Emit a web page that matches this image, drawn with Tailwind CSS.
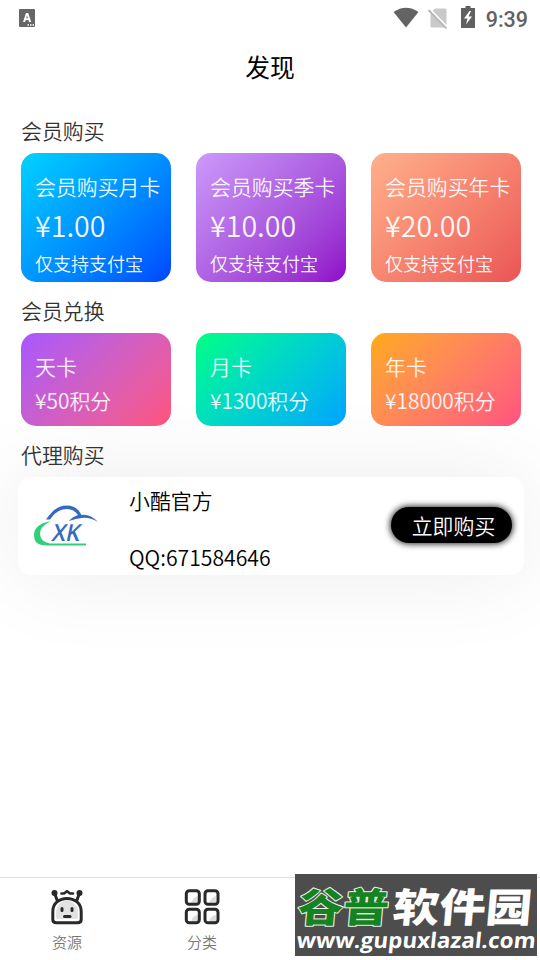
<!DOCTYPE html>
<html lang="zh-CN">
<head>
<meta charset="utf-8">
<meta name="viewport" content="width=device-width, initial-scale=1">
<title>发现</title>
<script src="https://cdn.jsdelivr.net/npm/@tailwindcss/browser@4"></script>
</head>
<body class="bg-white font-['Noto_Sans_CJK_SC',sans-serif] text-[20.9px] font-[350] text-[#333]">
<div class="relative flex h-[960px] w-[540px] flex-col overflow-hidden">
  <header class="flex h-9 shrink-0 items-center justify-between pl-[19px] pr-3">
    <svg class="h-[18px] w-4" viewBox="0 0 16 18"><rect width="16" height="18" rx="1" fill="#666"/><path d="M4 13 7 4h2.200l3 9H10l-.6-2H6.700l-.6 2zM7.200 9.200h1.700L8 6.500z" fill="#fff"/><path d="M8.500 16h1.500m1 0h1.500m1 0H15" stroke="#fff" stroke-width="1.400"/></svg>
    <div class="flex items-center">
      <svg class="mb-0.5 h-[21px] w-[26px]" viewBox="0 0 26 21"><path d="M0.500 5Q13-3.500 25.500 5L13 20.500z" fill="#636363"/></svg>
      <svg class="ml-[9px] h-[21px] w-5" viewBox="0 0 20 21"><path d="M7 .5h10q1.500 0 1.500 1.500V18q0 1-1 1.500H4q-1.500 0-1.500-1.500V5z" fill="#c9c9c9"/><path d="M1.500 1 20 20" stroke="#fff" stroke-width="2"/><path d="M.4 2 18.500 20.500" stroke="#b8b8b8" stroke-width="1.800"/></svg>
      <svg class="mb-0.5 ml-[13px] h-[22px] w-[14px]" viewBox="0 0 14 22"><path d="M4.500 0h5v2H14v20H0V2h4.500z" fill="#606060"/><path d="M8.500 5 3 12.500h3.500L5 18.500l6-8H7.500L10 5z" fill="#fff"/></svg>
      <span class="mt-[3px] ml-[11px] font-['Roboto',sans-serif] text-[21.500px] leading-none font-medium text-[#616161]">9:39</span>
    </div>
  </header>
  <h1 class="flex h-[62px] shrink-0 items-center justify-center text-[24.800px] font-normal text-black">发现</h1>

  <main class="flex flex-col px-[21px]">
    <h2 class="mt-[17px] h-[30px] leading-[30px] font-[350]">会员购买</h2>
    <div class="mt-[8px] grid grid-cols-[150px_150px_150px] gap-[25px] text-white/95">
      <section class="flex h-[129px] flex-col rounded-[15px] bg-linear-135 from-[#00d2ff] to-[#0044ff] pl-3.5 pt-[18px] whitespace-nowrap">
        <p class="h-[31px] leading-[30px]">会员购买月卡</p><p class="h-[46px] text-[28.600px] leading-[46px]">¥1.00</p><p class="h-[30px] text-[18px] leading-[30px]">仅支持支付宝</p>
      </section>
      <section class="flex h-[129px] flex-col rounded-[15px] bg-linear-135 from-[#cc99fa] to-[#9000c8] pl-3.5 pt-[18px] whitespace-nowrap">
        <p class="h-[31px] leading-[30px]">会员购买季卡</p><p class="h-[46px] text-[28.600px] leading-[46px]">¥10.00</p><p class="h-[30px] text-[18px] leading-[30px]">仅支持支付宝</p>
      </section>
      <section class="flex h-[129px] flex-col rounded-[15px] bg-linear-135 from-[#ffb08c] to-[#ea5455] pl-3.5 pt-[18px] whitespace-nowrap">
        <p class="h-[31px] leading-[30px]">会员购买年卡</p><p class="h-[46px] text-[28.600px] leading-[46px]">¥20.00</p><p class="h-[30px] text-[18px] leading-[30px]">仅支持支付宝</p>
      </section>
    </div>
    <h2 class="mt-[13px] h-[30px] leading-[30px] font-[350]">会员兑换</h2>
    <div class="relative z-10 mt-[8px] grid grid-cols-[150px_150px_150px] gap-[25px] text-white/90">
      <section class="flex h-[93px] flex-col rounded-[15px] bg-linear-135 from-[#a855ff] to-[#ff527b] pl-3.5 pt-[18px] whitespace-nowrap">
        <p class="h-[34px] leading-[30px]">天卡</p><p class="leading-[30px]">¥50积分</p>
      </section>
      <section class="flex h-[93px] flex-col rounded-[15px] bg-linear-135 from-[#00ff80] to-[#00a2ff] pl-3.5 pt-[18px] whitespace-nowrap">
        <p class="h-[34px] leading-[30px]">月卡</p><p class="leading-[30px]">¥1300积分</p>
      </section>
      <section class="flex h-[93px] flex-col rounded-[15px] bg-linear-135 from-[#ffaa00] to-[#ff527f] pl-3.5 pt-[18px] whitespace-nowrap">
        <p class="h-[34px] leading-[30px]">年卡</p><p class="leading-[30px]">¥18000积分</p>
      </section>
    </div>
    <h2 class="relative z-10 mt-[13px] h-[30px] leading-[30px] font-[350]">代理购买</h2>
    <section class="-mx-[3px] mt-[8px] flex h-[98px] w-[506px] items-center rounded-[14px] bg-white pr-3 shadow-[0_0_90px_rgba(0,0,0,0.080)]">
      <svg class="ml-[15px] h-[44px] w-[66px] shrink-0" viewBox="0 0 66 44" fill="none">
        <path d="M13 15.500C18 9 23 1.500 34 1.500q10 0 14.500 9.500 8-1.500 16.500 7-9-5-16-4-6 .5-13 3 3-4 9-6-4-6-11-6-9 0-15 8l-2 2.500z" fill="#356bbf"/>
        <path d="M18 17Q1 20 1 31q0 10.500 12 10.500H53v-2H17Q7 38 7 29.500q0-7 11-12.500z" fill="#32cf7b"/>
        <text transform="translate(18 36.500) skewX(-12)" textLength="28" lengthAdjust="spacingAndGlyphs" font-family="Open Sans, sans-serif" font-size="23.500" font-weight="600" fill="#356bbf">XK</text>
      </svg>
      <div class="ml-[30px] flex h-full flex-col text-black"><p class="mt-[8px] h-[57px] leading-[30px]">小酷官方</p><p class="h-[30px] text-[21.200px] leading-[30px]">QQ:671584646</p></div>
      <button class="mb-[2px] ml-auto h-9 w-[121px] rounded-full bg-black pl-[4px] leading-[37px] text-white shadow-[0_0_6px_1px_rgba(0,0,0,0.850)]">立即购买</button>
    </section>
  </main>

  <nav class="mt-auto flex h-[83px] shrink-0 border-t border-[#ddd] text-[15px] text-[#777]">
    <a class="flex w-[134px] flex-col items-center pt-[11px]">
      <svg class="size-9" viewBox="0 0 36 36" fill="none" stroke="#292929" stroke-linecap="round" stroke-linejoin="round"><path d="M7 29V22Q9 12 18 11.500q9 .5 11 10.500v7q0 1-2 1H9q-2 0-2-1z" fill="#e2e2e2" stroke="none"/><path d="M3.800 22.500C3.800 5 32.200 5 32.200 22.500v8q0 3.200-3.500 3.200H7.300q-3.500 0-3.500-3.200zM8 11 5.500 4M28 11l2.500-7" stroke-width="3"/><path d="M12.500 4.500H15L18 2.200l3 2.300h3" stroke-width="2.600"/><path d="M13 19.500v2m10-2v2" stroke-width="3"/><path d="M15.500 27.500h5.500" stroke-width="3"/><g fill="#292929" stroke="none"><circle cx="5.500" cy="4" r="3"/><circle cx="30.500" cy="4" r="3"/></g></svg>
      <span class="mt-[5px] leading-6">资源</span>
    </a>
    <a class="flex w-[136px] flex-col items-center pt-[11px]">
      <svg class="size-9" viewBox="0 0 36 36"><g fill="#ddd"><path d="M14 7v8H7q1-6 7-8zm18 0v8h-7q1-6 7-8zM14 26v7H7q1-6 7-7zm18 0v7h-7q1-6 7-7z"/></g><g fill="none" stroke="#292929" stroke-width="3"><rect x="2.300" y="1.800" width="13" height="13.500" rx="3"/><rect x="21" y="1.800" width="13" height="13.500" rx="3"/><rect x="2.300" y="20.300" width="13" height="13.500" rx="3"/><rect x="21" y="20.300" width="13" height="13.500" rx="3"/></g></svg>
      <span class="mt-[5px] leading-6">分类</span>
    </a>
  </nav>

  <svg class="absolute left-[295px] top-[874px] h-[86px] w-[245px] overflow-visible" viewBox="0 0 245 86">
    <rect width="242" height="82" fill="#4d4d4d"/>
    <g font-family="Noto Sans CJK SC, sans-serif" font-size="40" font-weight="900" stroke-linejoin="round" transform="skewX(-5)">
      <text x="6" y="48" textLength="91" lengthAdjust="spacingAndGlyphs" fill="#168322" stroke="#e8f4e8" stroke-width="2" paint-order="stroke">谷普</text>
      <text x="101" y="48" textLength="139" lengthAdjust="spacingAndGlyphs" fill="#fff">软件园</text>
    </g>
    <text transform="translate(1 74) skewX(-6)" textLength="239" lengthAdjust="spacingAndGlyphs" font-family="Open Sans, sans-serif" font-size="21.500" font-weight="700" fill="#fff">www.gupuxlazal.com</text>
  </svg>
</div>
</body>
</html>
